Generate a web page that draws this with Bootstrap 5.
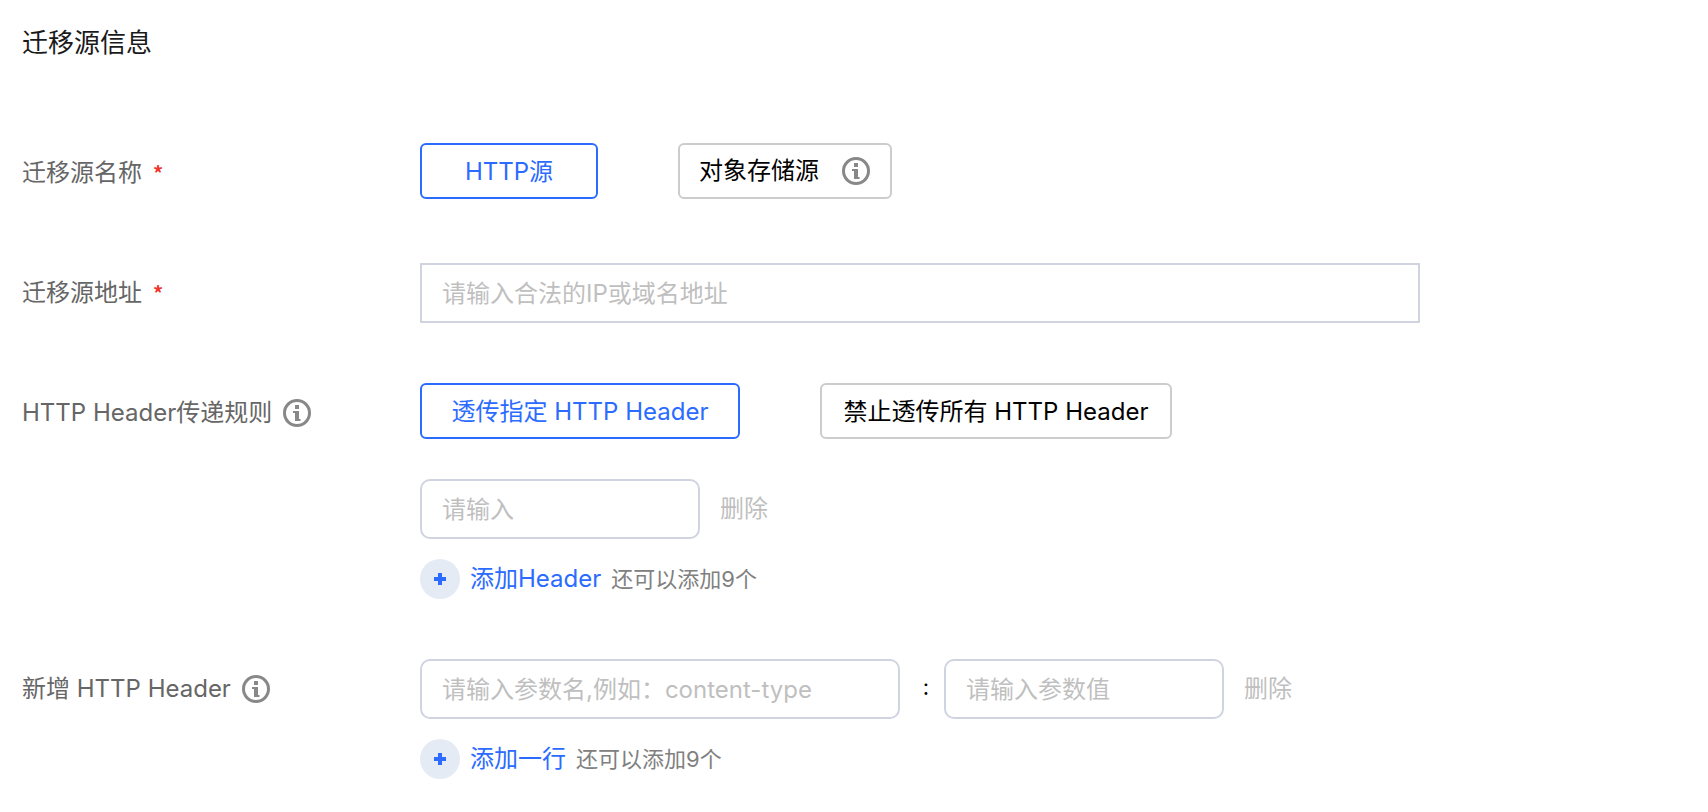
<!DOCTYPE html>
<html lang="zh-CN">
<head>
<meta charset="utf-8">
<meta name="viewport" content="width=device-width, initial-scale=1">
<title>迁移源信息</title>
<link href="https://cdn.jsdelivr.net/npm/bootstrap@5.3.0/dist/css/bootstrap.min.css" rel="stylesheet">
<style>
  body { font-family: Inter, "Noto Sans CJK SC", sans-serif; font-size: 24px; line-height: 36px; color: #000; background: #fff; }
  .page { padding: 22px; }
  .page-title { font-size: 26px; line-height: 42px; font-weight: 400; color: #1a1a1a; margin-bottom: 79px; }
  .form-rows { display: flex; flex-direction: column; gap: 60px; }
  .field-label { flex: 0 0 398px; min-height: 60px; color: #666; gap: 11px; }
  .required-mark { font-family: "Noto Sans CJK SC", sans-serif; font-size: 20px; font-weight: 700; color: #f0352b; }
  .choices { gap: 16px 80px; }
  .choice { --bs-btn-font-size: 24px; --bs-btn-line-height: 36px; --bs-btn-padding-x: 20px;
    --bs-btn-border-width: 2px; --bs-btn-border-radius: 6px; --bs-btn-color: #000; --bs-btn-border-color: #ccc;
    --bs-btn-active-color: #2b6bff; --bs-btn-active-border-color: #2b6bff; --bs-btn-active-bg: #fff;
    --bs-btn-hover-color: #2b6bff; --bs-btn-hover-border-color: #2b6bff; padding-top: 9px; padding-bottom: 7px; }
  .choice-sm { min-width: 178px; }
  .choice-md { min-width: 214px; height: 56px; padding: 8px 20px 8px 19px; }
  .choice-lg { min-width: 320px; }
  .choice-xl { min-width: 352px; }
  .entry { height: 60px; padding: 10px 20px; font-size: 24px; border: 2px solid #cfd4e0; border-radius: 10px; }
  .entry::placeholder { color: #bfbfbf; }
  .entry-full { max-width: 1000px; border-radius: 0; }
  .entry-name { width: 480px; }
  .entry-value { width: 280px; }
  .colon { width: 44px; padding: 0 0 4px 8px; font-size: 22px; }
  .text-action { border: 0; padding: 0; background: none; color: #bfbfbf; }
  .add-action { border: 0; padding: 0; background: none; color: #2b6bff; gap: 10px; }
  .hint { font-size: 22px; color: #808080; margin-left: 10px; }
  .info-icon { width: 28px; height: 28px; color: #888; }
  .mt-row { margin-top: 40px; }
  .mt-add { margin-top: 20px; }
</style>
</head>
<body>
<svg class="d-none" xmlns="http://www.w3.org/2000/svg">
  <symbol id="info" viewBox="0 0 28 28">
    <circle cx="14" cy="14" r="12.5" fill="none" stroke="currentColor" stroke-width="3"/>
    <path fill="currentColor" d="M12 6h4v4h-4zM10 12h6v8h1.500v2h-5.500v-8h-2z"/>
  </symbol>
  <symbol id="plus" viewBox="0 0 40 40">
    <circle cx="20" cy="20" r="20" fill="#e5ebf4"/>
    <path fill="#2b6bff" d="M18 14h4v4h4v4h-4v4h-4v-4h-4v-4h4z"/>
  </symbol>
</svg>
<main class="container-fluid page">
  <h1 class="page-title">迁移源信息</h1>
  <form class="form-rows">
    <div class="d-flex" role="group" aria-labelledby="source-type">
      <div class="field-label d-flex align-items-center" id="source-type">迁移源名称<span class="required-mark">*</span></div>
      <div class="choices d-flex flex-wrap align-items-start">
        <button type="button" class="btn choice choice-sm active" aria-pressed="true">HTTP源</button>
        <button type="button" class="btn choice choice-md d-flex align-items-center justify-content-between" aria-pressed="false">对象存储源<svg class="info-icon" aria-hidden="true"><use href="#info"/></svg></button>
      </div>
    </div>

    <div class="d-flex">
      <label class="field-label d-flex align-items-center" for="address">迁移源地址<span class="required-mark">*</span></label>
      <input class="form-control entry entry-full" id="address" type="text" placeholder="请输入合法的IP或域名地址">
    </div>

    <div class="d-flex align-items-start" role="group" aria-labelledby="rule-label">
      <label class="field-label d-flex align-items-center" id="rule-label" for="pass-header">HTTP Header传递规则<svg class="info-icon" aria-hidden="true"><use href="#info"/></svg></label>
      <div class="flex-grow-1">
        <div class="choices d-flex flex-wrap">
          <button type="button" class="btn choice choice-lg active" aria-pressed="true">透传指定 HTTP Header</button>
          <button type="button" class="btn choice choice-xl" aria-pressed="false">禁止透传所有 HTTP Header</button>
        </div>
        <div class="mt-row d-flex align-items-center">
          <input class="form-control entry entry-value" id="pass-header" type="text" placeholder="请输入">
          <button type="button" class="text-action ms-3 ps-1">删除</button>
        </div>
        <div class="mt-add d-flex align-items-center">
          <button type="button" class="add-action d-flex align-items-center"><svg width="40" height="40" aria-hidden="true"><use href="#plus"/></svg>添加Header</button>
          <span class="hint">还可以添加9个</span>
        </div>
      </div>
    </div>

    <div class="d-flex align-items-start">
      <label class="field-label d-flex align-items-center" for="param-name">新增 HTTP Header<svg class="info-icon" aria-hidden="true"><use href="#info"/></svg></label>
      <div class="flex-grow-1">
        <div class="d-flex align-items-center">
          <input class="form-control entry entry-name" id="param-name" type="text" placeholder="请输入参数名,例如：content-type">
          <span class="colon text-center">:</span>
          <input class="form-control entry entry-value" type="text" aria-label="参数值" placeholder="请输入参数值">
          <button type="button" class="text-action ms-3 ps-1">删除</button>
        </div>
        <div class="mt-add d-flex align-items-center">
          <button type="button" class="add-action d-flex align-items-center"><svg width="40" height="40" aria-hidden="true"><use href="#plus"/></svg>添加一行</button>
          <span class="hint">还可以添加9个</span>
        </div>
      </div>
    </div>
  </form>
</main>
<script src="https://cdn.jsdelivr.net/npm/bootstrap@5.3.0/dist/js/bootstrap.bundle.min.js"></script>
</body>
</html>
